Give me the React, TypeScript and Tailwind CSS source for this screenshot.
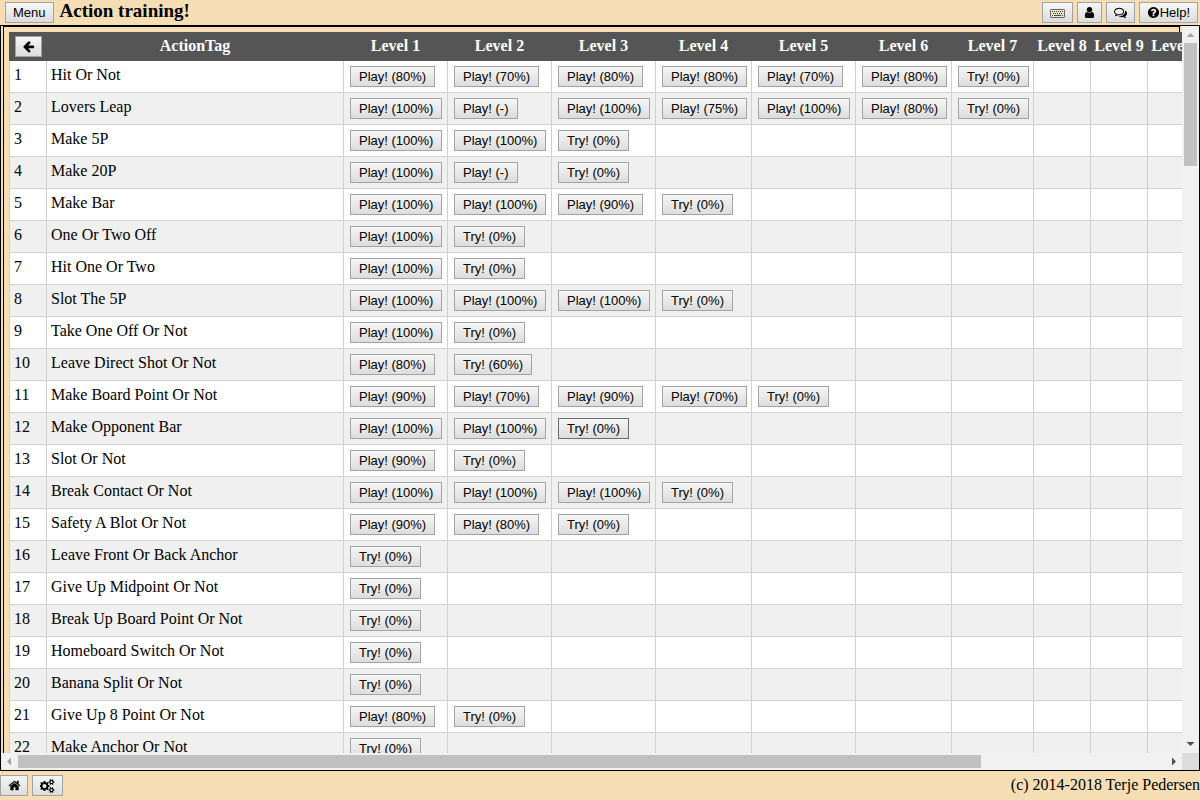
import type { ReactNode } from "react";

const paths = {
  home: "M1472 992v480q0 26-19 45t-45 19h-384v-384h-256v384h-384q-26 0-45-19t-19-45v-480q0-1 .5-3t.5-3l575-474 575 474q1 2 1 6zm223-69l-62 74q-8 9-21 11h-3q-13 0-21-7l-692-577-692 577q-12 8-24 7-13-2-21-11l-62-74q-8-10-7-23.500t11-21.500l719-599q32-26 76-26t76 26l244 204v-195q0-14 9-23t23-9h192q14 0 23 9t9 23v408l219 182q10 8 11 21.500t-7 23.500z",
  arrow: "M1664 896v128q0 53-32.5 90.5t-84.5 37.5h-704l293 294q38 36 38 90t-38 90l-75 76q-37 37-90 37-52 0-91-37l-651-652q-37-37-37-90 0-52 37-91l651-650q38-38 91-38 52 0 90 38l75 74q38 38 38 91t-38 91l-293 293h704q52 0 84.5 37.5t32.5 90.5z",
  help: "M1024 1376v-192q0-14-9-23t-23-9h-192q-14 0-23 9t-9 23v192q0 14 9 23t23 9h192q14 0 23-9t9-23zm256-672q0-88-55.5-163t-138.5-116-170-41q-243 0-371 213-15 24 8 42l132 100q7 6 19 6 16 0 25-12 53-68 86-92 34-24 86-24 48 0 85.500 26t37.500 59q0 38-20 61t-68 45q-63 28-115.500 86.500t-52.500 125.500v36q0 14 9 23t23 9h192q14 0 23-9t9-23q0-19 21.500-49.500t54.500-49.500q32-18 49-28.500t46-35 44.500-48 28-60.500 12.500-81zm384 192q0 209-103 385.500t-279.500 279.500-385.500 103-385.500-103-279.500-279.500-103-385.500 103-385.500 279.500-279.500 385.500-103 385.500 103 279.500 279.500 103 385.500z",
  user: "M1536 1399q0 109-62.5 187t-150.5 78h-854q-88 0-150.500-78t-62.500-187q0-85 8.500-160.500t31.500-152 58.500-131 94-89 134.500-34.500q131 128 313 128t313-128q76 0 134.500 34.500t94 89 58.500 131 31.500 152 8.500 160.500zm-256-887q0 159-112.500 271.500t-271.500 112.500-271.500-112.500-112.500-271.500 112.500-271.500 271.500-112.500 271.500 112.500 112.500 271.500z",
  comments:
    "M704 384q-153 0-286 52t-211.500 141-78.500 191q0 82 53 158t149 132l97 56-35 84q34-20 62-39l44-31 53 10q78 14 153 14 153 0 286-52t211.500-141 78.500-191-78.500-191-211.500-141-286-52zm0-128q191 0 353.500 68.500t256.500 186.500 94 257-94 257-256.500 186.500-353.500 68.500q-86 0-176-16-124 88-278 128-36 9-86 16h-3q-11 0-20.5-8t-11.5-21q-1-3-1-6.500t.5-6.500 2-6l2.500-5 3.500-5.500 4-5 4.500-5 4-4.500q5-6 23-25t26-29.500 22.500-29 25-38.500 20.500-44q-124-72-195-177t-71-224q0-139 94-257t256.500-186.500 353.500-68.500zm822 1169q10 24 20.5 44t25 38.500 22.500 29 26 29.500 23 25q1 1 4 4.500t4.500 5 4 5 3.500 5.500l2.500 5 2 6 .5 6.500-1 6.500q-3 14-13 22t-22 7q-50-7-86-16-154-40-278-128-90 16-176 16-271 0-472-132 58 4 88 4 161 0 309-45t264-129q125-92 192-212t67-254q0-77-23-152 129 71 204 178t75 230q0 120-71 224.500t-195 176.500z",
  bigCog:
    "M832 896q0-106-75-181t-181-75-181 75-75 181 75 181 181 75 181-75 75-181zm384-91v185q0 10-7 19.500t-16 10.500l-155 24q-11 35-32 76 34 48 90 115 7 11 7 20 0 12-7 19-23 30-82.500 89.500t-78.500 59.500q-11 0-21-7l-115-90q-37 19-77 31-11 108-23 155-7 24-30 24h-186q-11 0-20-7.500t-10-17.500l-23-153q-34-10-75-31l-118 89q-7 7-20 7-11 0-21-8-144-133-144-160 0-9 7-19 10-14 41-53t47-61q-23-44-35-82l-152-24q-10-1-17-9.500t-7-19.500v-185q0-10 7-19.500t16-10.500l155-24q11-35 32-76-34-48-90-115-7-11-7-20 0-12 7-20 22-30 82-89t79-59q11 0 21 7l115 90q34-18 77-32 11-108 23-154 7-24 30-24h186q11 0 20 7.500t10 17.500l23 153q34 10 75 31l118-89q8-7 20-7 11 0 21 8 144 133 144 160 0 8-7 19-12 16-42 54t-45 60q23 48 34 82l152 23q10 2 17 10.500t7 19.500z",
  smallCog:
    "M1600 1408q0-52-38-90t-90-38-90 38-38 90q0 53 37.500 90.500t90.500 37.500 90.500-37.500 37.500-90.500zm256-70v140q0 16-149 31-12 27-30 52 51 113 51 138 0 4-4 7-122 71-124 71-8 0-46-47t-52-68q-20 2-30 2t-30-2q-14 21-52 68t-46 47q-2 0-124-71-4-3-4-7 0-25 51-138-18-25-30-52-149-15-149-31v-140q0-16 149-31 13-29 30-52-51-113-51-138 0-4 4-7 4-2 35-20t59-34 30-16q8 0 46 46.500t52 67.500q20-2 30-2t30 2q51-71 92-112l6-2q4 0 124 70 4 3 4 7 0 25-51 138 17 23 30 52 149 15 149 31z",
};

function Icon({ d }: { d: string }) {
  return (
    <svg viewBox="0 0 1792 1792" className="h-[13px] w-[13px] shrink-0" fill="currentColor" aria-hidden="true">
      <path d={d} />
    </svg>
  );
}

function CogsIcon() {
  return (
    <svg viewBox="0 0 1920 1792" className="h-3.5 w-[15px]" fill="currentColor" fillRule="evenodd" aria-hidden="true">
      <path d={paths.bigCog} />
      <path d={paths.smallCog} />
      <path d={paths.smallCog} transform="translate(0 -1024)" />
    </svg>
  );
}

function KeyboardIcon() {
  return (
    <svg viewBox="0 0 15 14" className="h-3.5 w-[15px]" aria-hidden="true">
      <rect x="0.5" y="3.500" width="14" height="8" rx="0.6" fill="#efe6cf" stroke="#666" strokeWidth="1" />
      <path d="M2 5.500h11M3 7.500h10" stroke="#333" strokeWidth="1" strokeDasharray="1 1" />
      <path d="M2 9.500h1M4 9.500h7M12 9.500h1" stroke="#444" strokeWidth="1" />
    </svg>
  );
}

type PushProps = { children: ReactNode; label?: string; className?: string; strong?: boolean };

function Push({ children, label, className = "px-[7px]", strong = false }: PushProps) {
  return (
    <button
      type="button"
      aria-label={label}
      className={`flex h-[21px] items-center justify-center whitespace-nowrap border bg-linear-to-b from-[#f6f6f6] to-[#dddddd] font-['Liberation_Sans',Arial,sans-serif] text-[13px] leading-4 text-black hover:border-[#6b6b6b] ${
        strong ? "border-[#6b6b6b]" : "border-[#a3a3a3]"
      } ${className}`}
    >
      {children}
    </button>
  );
}

const rows: [string, string[]][] = [
  ["Hit Or Not", ["Play! (80%)", "Play! (70%)", "Play! (80%)", "Play! (80%)", "Play! (70%)", "Play! (80%)", "Try! (0%)"]],
  ["Lovers Leap", ["Play! (100%)", "Play! (-)", "Play! (100%)", "Play! (75%)", "Play! (100%)", "Play! (80%)", "Try! (0%)"]],
  ["Make 5P", ["Play! (100%)", "Play! (100%)", "Try! (0%)"]],
  ["Make 20P", ["Play! (100%)", "Play! (-)", "Try! (0%)"]],
  ["Make Bar", ["Play! (100%)", "Play! (100%)", "Play! (90%)", "Try! (0%)"]],
  ["One Or Two Off", ["Play! (100%)", "Try! (0%)"]],
  ["Hit One Or Two", ["Play! (100%)", "Try! (0%)"]],
  ["Slot The 5P", ["Play! (100%)", "Play! (100%)", "Play! (100%)", "Try! (0%)"]],
  ["Take One Off Or Not", ["Play! (100%)", "Try! (0%)"]],
  ["Leave Direct Shot Or Not", ["Play! (80%)", "Try! (60%)"]],
  ["Make Board Point Or Not", ["Play! (90%)", "Play! (70%)", "Play! (90%)", "Play! (70%)", "Try! (0%)"]],
  ["Make Opponent Bar", ["Play! (100%)", "Play! (100%)", "Try! (0%)"]],
  ["Slot Or Not", ["Play! (90%)", "Try! (0%)"]],
  ["Break Contact Or Not", ["Play! (100%)", "Play! (100%)", "Play! (100%)", "Try! (0%)"]],
  ["Safety A Blot Or Not", ["Play! (90%)", "Play! (80%)", "Try! (0%)"]],
  ["Leave Front Or Back Anchor", ["Try! (0%)"]],
  ["Give Up Midpoint Or Not", ["Try! (0%)"]],
  ["Break Up Board Point Or Not", ["Try! (0%)"]],
  ["Homeboard Switch Or Not", ["Try! (0%)"]],
  ["Banana Split Or Not", ["Try! (0%)"]],
  ["Give Up 8 Point Or Not", ["Play! (80%)", "Try! (0%)"]],
  ["Make Anchor Or Not", ["Try! (0%)"]],
];

const levelColumns = [
  "w-[104px]", "w-[104px]", "w-[104px]", "w-[96px]", "w-[104px]", "w-[96px]", "w-[82px]",
  "w-[57px]", "w-[57px]", "w-[65px]", "w-[65px]", "w-[65px]", "w-[65px]",
];

const cell = "border-b border-l border-[#d0d0d0] px-1 pt-[5px] align-top";
const heading = "whitespace-nowrap border-l border-transparent pb-0.5";

function TrainingTable() {
  return (
    <table className="w-[1398px] table-fixed border-separate border-spacing-0 leading-[18px]">
      <colgroup>
        <col className="w-[37px]" />
        <col className="w-[297px]" />
        {levelColumns.map((width, i) => (
          <col key={i} className={width} />
        ))}
      </colgroup>
      <thead>
        <tr className="h-[29px] bg-[#555555] text-white">
          <th className="pl-1.5">
            <Push label="Back" className="w-[27px]">
              <Icon d={paths.arrow} />
            </Push>
          </th>
          <th className={heading}>ActionTag</th>
          {levelColumns.map((_, i) => (
            <th key={i} className={heading}>Level {i + 1}</th>
          ))}
        </tr>
      </thead>
      <tbody>
        {rows.map(([name, levels], r) => (
          <tr key={name} className="h-8 bg-white even:bg-[#f0f0f0]">
            <td className={cell}>{r + 1}</td>
            <td className={cell}>{name}</td>
            {levelColumns.map((_, i) => (
              <td key={i} className={cell}>
                {levels[i] && (
                  <Push className="ml-0.5 px-2" strong={name === "Make Opponent Bar" && i === 2}>
                    {levels[i]}
                  </Push>
                )}
              </td>
            ))}
          </tr>
        ))}
      </tbody>
    </table>
  );
}

function Arrow({ points, color }: { points: string; color: string }) {
  return (
    <svg viewBox="0 0 17 17" className="h-[17px] w-[17px] shrink-0" fill={color} aria-hidden="true">
      <polygon points={points} />
    </svg>
  );
}

export default function App() {
  return (
    <div className="flex h-screen flex-col overflow-hidden bg-[#f5deb3] font-['Liberation_Serif','Times_New_Roman',serif] text-base text-black">
      <header className="flex h-[25px] shrink-0 items-center gap-1 pl-[5px] pr-0.5">
        <Push>Menu</Push>
        <h1 className="mr-auto pb-1 pl-0.5 text-[19px] font-bold leading-5">Action training!</h1>
        <Push label="Keyboard"><KeyboardIcon /></Push>
        <Push label="User" className="px-[5px]"><Icon d={paths.user} /></Push>
        <Push label="Comments"><Icon d={paths.comments} /></Push>
        <Push><Icon d={paths.help} />Help!</Push>
      </header>

      <main className="grid min-h-0 flex-1 grid-cols-[minmax(0,1fr)_17px] grid-rows-[minmax(0,1fr)_17px] border border-black">
        <div className="overflow-auto pl-0.5 pr-0.5 [scrollbar-width:none]">
          <div className="border border-black p-[5px]">
            <TrainingTable />
          </div>
        </div>
        <div className="flex flex-col bg-[#f1f1f1]" aria-hidden="true">
          <Arrow points="4.500,11 12.500,11 8.500,7" color="#a3a3a3" />
          <div className="mx-0.5 flex-[123] bg-[#c1c1c1]" />
          <div className="flex-[570]" />
          <Arrow points="4.500,6 12.500,6 8.500,10" color="#505050" />
        </div>
        <div className="flex bg-[#f1f1f1]" aria-hidden="true">
          <Arrow points="10,4.500 10,12.500 6,8.500" color="#a3a3a3" />
          <div className="my-0.5 flex-[963] bg-[#c1c1c1]" />
          <div className="flex-[184]" />
          <Arrow points="7,4.500 7,12.500 11,8.500" color="#505050" />
        </div>
        <div className="bg-[#dcdcdc]" />
      </main>

      <footer className="flex h-[29px] shrink-0 items-center gap-1">
        <Push label="Home" className="w-7"><Icon d={paths.home} /></Push>
        <Push label="Settings"><CogsIcon /></Push>
        <p className="ml-auto pb-0.5">(c) 2014-2018 Terje Pedersen</p>
      </footer>
    </div>
  );
}
